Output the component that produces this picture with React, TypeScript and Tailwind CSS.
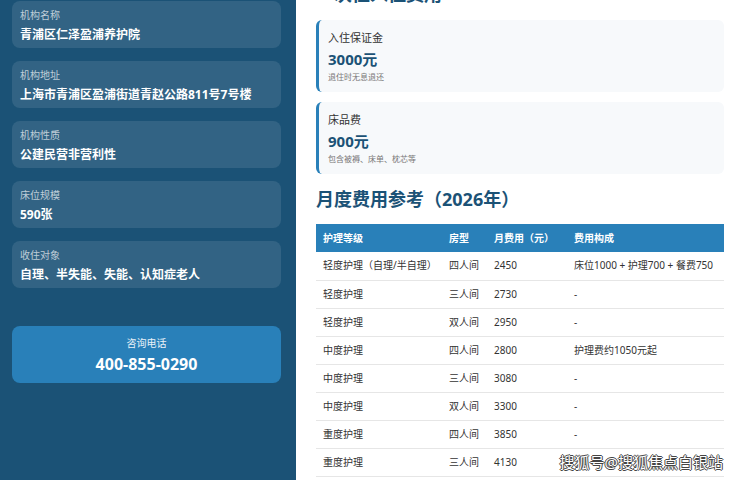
const info = [
  { label: '机构名称', value: '青浦区仁泽盈浦养护院' },
  { label: '机构地址', value: '上海市青浦区盈浦街道青赵公路811号7号楼' },
  { label: '机构性质', value: '公建民营非营利性' },
  { label: '床位规模', value: '590张' },
  { label: '收住对象', value: '自理、半失能、失能、认知症老人' },
];

const fees = [
  { title: '入住保证金', value: '3000元', note: '退住时无息退还' },
  { title: '床品费', value: '900元', note: '包含被褥、床单、枕芯等' },
];

const rows = [
  ['轻度护理（自理/半自理）', '四人间', '2450', '床位1000 + 护理700 + 餐费750'],
  ['轻度护理', '三人间', '2730', '-'],
  ['轻度护理', '双人间', '2950', '-'],
  ['中度护理', '四人间', '2800', '护理费约1050元起'],
  ['中度护理', '三人间', '3080', '-'],
  ['中度护理', '双人间', '3300', '-'],
  ['重度护理', '四人间', '3850', '-'],
  ['重度护理', '三人间', '4130', ''],
];

export default function App() {
  return (
    <div className="relative flex h-[480px] w-[740px] overflow-hidden bg-white font-['Noto_Sans','Noto_Sans_CJK_SC',sans-serif]">
      <aside className="flex w-[296px] shrink-0 flex-col bg-[#1b5276] pt-[1px] pl-3 pr-[15px]">
        <div className="flex flex-col gap-[13px]">
          {info.map((item) => (
            <div
              key={item.label}
              className="rounded-lg bg-white/10 px-2 pt-[7px] pb-[4px]"
            >
              <p className="text-[10px] leading-[14px] text-white/70">{item.label}</p>
              <p className="mt-[3px] text-[12px] font-bold leading-[19px] text-white">
                {item.value}
              </p>
            </div>
          ))}
        </div>
        <div className="mt-[38px] rounded-lg bg-[#2980b9] pt-[10px] pb-[7px] text-center">
          <p className="text-[10px] leading-[15px] text-white/90">咨询电话</p>
          <p className="mt-[1px] text-[16px] font-bold leading-[24px] text-white">
            400-855-0290
          </p>
        </div>
      </aside>

      <main className="flex-1 pl-5 pr-4">
        <div className="mt-[-19px]">
          <h2 className="mb-3 text-[18px] font-bold leading-[27px] text-[#1b5276]">
            一次性入住费用
          </h2>
          <div className="flex flex-col gap-[10px]">
            {fees.map((f) => (
              <div
                key={f.title}
                className="rounded-md border-l-[3px] border-[#2980b9] bg-[#f7f9fb] pl-[9px] pt-2 pb-2"
              >
                <p className="text-[11px] leading-[19px] text-[#333]">{f.title}</p>
                <p className="mt-[2px] text-[15px] font-bold leading-[20px] text-[#1b5276]">
                  {f.value}
                </p>
                <p className="mt-[1px] text-[8px] leading-[14px] text-[#777]">{f.note}</p>
              </div>
            ))}
          </div>

          <h2 className="mt-3 mb-[11px] text-[18px] font-bold leading-[27px] text-[#1b5276]">
            月度费用参考（2026年）
          </h2>
          <table className="w-full table-fixed border-collapse text-left text-[10px]">
            <thead>
              <tr className="h-[28px] bg-[#2980b9] text-white">
                <th className="w-[126px] px-[7px] font-bold">护理等级</th>
                <th className="w-[45px] px-[7px] font-bold">房型</th>
                <th className="w-[80px] px-[7px] font-bold">月费用（元）</th>
                <th className="px-[7px] font-bold">费用构成</th>
              </tr>
            </thead>
            <tbody>
              {rows.map((r, i) => (
                <tr key={i} className="h-[28px] border-b border-[#e6e6e6] text-[#333]">
                  {r.map((c, j) => (
                    <td key={j} className="whitespace-nowrap px-[7px]">
                      {c}
                    </td>
                  ))}
                </tr>
              ))}
            </tbody>
          </table>
        </div>
      </main>

      <div className="absolute top-[451px] right-[17px] text-[15px] leading-[22px] text-white [text-shadow:1px_0_#444,-1px_0_#444,0_1px_#444,0_-1px_#444]">
        搜狐号@搜狐焦点白银站
      </div>
    </div>
  );
}
